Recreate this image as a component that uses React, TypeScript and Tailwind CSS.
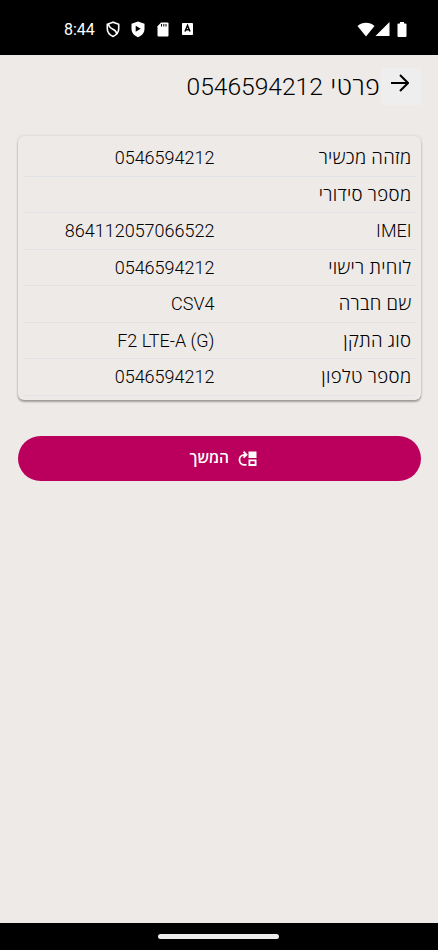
const rows = [
  { label: 'מזהה מכשיר', value: '0546594212' },
  { label: 'מספר סידורי', value: '' },
  { label: 'IMEI', value: '864112057066522' },
  { label: 'לוחית רישוי', value: '0546594212' },
  { label: 'שם חברה', value: 'CSV4' },
  { label: 'סוג התקן', value: 'F2 LTE-A (G)' },
  { label: 'מספר טלפון', value: '0546594212' },
];

function StatusBar() {
  return (
    <div dir="ltr" className="flex h-[55px] shrink-0 items-center bg-black pt-[3px] pr-[31px] pl-16 text-white">
      <span className="w-[42px] pt-[2px] text-[16px] leading-5">8:44</span>
      <svg className="mr-[11px] h-[17px] w-[14px]" viewBox="0 0 14 17" fill="none" stroke="currentColor" strokeWidth="1.6">
        <path d="M7 1.200 1.300 3.200v4.600c0 3.400 2.300 6.200 5.700 7.600 3.400-1.400 5.700-4.200 5.700-7.600V3.200z" />
        <path d="M2.500 3c.300 3 2 4 4.500 5.300s3.500 2.700 3.800 4.700" />
      </svg>
      <svg className="mr-[12px] h-[17px] w-[14px]" viewBox="0 0 14 17">
        <path fill="currentColor" d="M7 .500.500 2.800v5c0 3.900 2.600 7 6.500 8.500 3.900-1.500 6.500-4.600 6.500-8.500v-5z" />
        <path fill="#000" d="M4.700 4.800v6l5-3z" />
      </svg>
      <svg className="mr-[13px] h-[15px] w-[12px]" viewBox="0 0 12 15">
        <path fill="currentColor" d="M4 .500h6.500q1 0 1 1v12q0 1-1 1h-9q-1 0-1-1V4.200z" />
        <path stroke="#000" d="M4.500 2v2.500M6.800 2v2.500M9 2v2.500" />
      </svg>
      <svg className="h-[12px] w-[11px]" viewBox="0 0 11 12">
        <rect width="11" height="12" rx=".7" fill="currentColor" />
        <path d="m3 8.500 2.500-6 2.500 6M4 6.700h3" fill="none" stroke="#000" strokeWidth="1.500" />
      </svg>
      <svg className="ml-auto h-[15px] w-[18px]" viewBox="0 0 18 15" fill="currentColor">
        <path d="M.500 4C5.500-.200 12.500-.200 17.500 4L9 14.500z" />
      </svg>
      <svg className="h-[14px] w-[15px]" viewBox="0 0 15 14" fill="currentColor">
        <path d="M.500 14 14.500 0v14z" />
      </svg>
      <svg className="ml-[7px] h-[15px] w-[10px]" viewBox="0 0 10 15" fill="currentColor">
        <path d="M3 0h4v1.500h1.500q1 0 1 1V14q0 1-1 1h-7q-1 0-1-1V2.500q0-1 1-1H3z" />
      </svg>
    </div>
  );
}

export default function App() {
  return (
    <div dir="rtl" className="flex h-[950px] w-[438px] flex-col overflow-hidden bg-[#eeeae7] font-[Roboto,'Open_Sans',sans-serif] text-black">
      <StatusBar />
      <main className="flex-1 pt-[13px] pr-[17.500px] pl-[18px]">
        <header className="flex h-[36.500px]">
          <button aria-label="חזרה" className="flex w-10 items-center justify-center bg-[#eeeeee] pr-[1px] pb-[7px]">
            <svg className="h-[18px] w-[18px]" viewBox="0 0 18 18" fill="none" stroke="currentColor" strokeWidth="2">
              <path d="M0 9h16M9 1l8 8-8 8" />
            </svg>
          </button>
          <h1 className="text-[24.600px] leading-[37px] font-light whitespace-nowrap [word-spacing:1.500px]">
            <span className="tracking-[0.7px]">פרטי</span> 0546594212
          </h1>
        </header>
        <section className="mt-[31.500px] h-[264px] rounded-[6px] px-[5px] pt-[4px] shadow-[0_2px_2px_rgba(0,0,0,0.3),0_0_3px_rgba(0,0,0,0.14)]">
          {rows.map((row) => (
            <div key={row.label} className="flex h-[36.500px] items-center border-b border-[#e1e3e7] pt-[1px] pr-[4px] text-[18px] leading-6 font-light">
              <span className={row.label === 'IMEI' ? 'w-[197px]' : 'w-[197px] text-[18.600px] tracking-[0.35px]'}>{row.label}</span>
              <span dir="ltr" className="whitespace-nowrap">{row.value}</span>
            </div>
          ))}
        </section>
        <button className="mt-[36px] flex h-[44.500px] w-full items-center justify-center gap-[9px] rounded-full bg-[#ba005c] pl-[8px] text-[15.500px] font-semibold text-white">
          <svg className="h-[15px] w-[19px]" viewBox="0 0 19 15" fill="none" stroke="currentColor" strokeWidth="1.800">
            <path d="M8.500 13.800H7A5 5 0 0 1 6 3.800h2M5.500.700 8.500 3.800 5.500 6.700" />
            <path d="M10.500.500h8v6.500h-8z" fill="currentColor" stroke="none" />
            <path d="M11.400 9.400h6.200v4.600h-6.200z" />
          </svg>
          <span>המשך</span>
        </button>
      </main>
      <footer className="flex h-[27px] shrink-0 justify-center bg-black pt-[11px] pr-[1px]">
        <div className="h-[5px] w-[121px] rounded-full bg-[#ececec]" />
      </footer>
    </div>
  );
}
